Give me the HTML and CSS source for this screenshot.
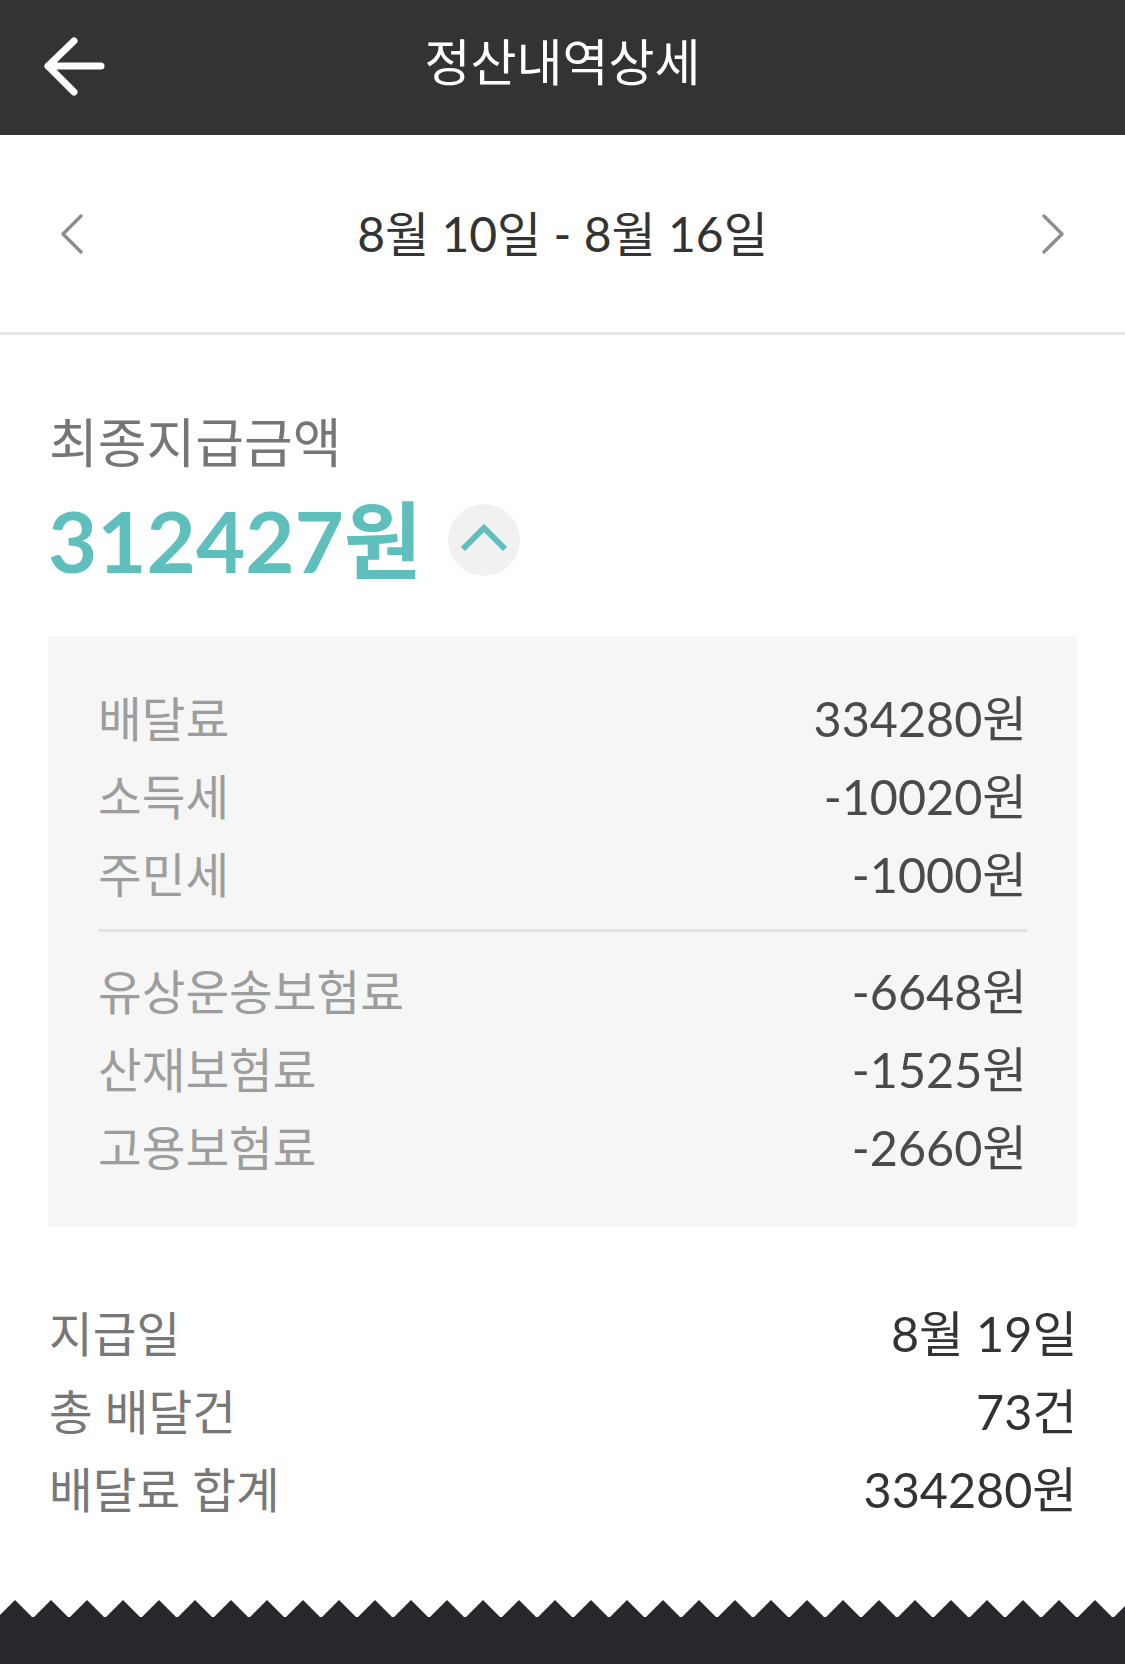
FILE: index.html
```html
<!DOCTYPE html>
<html lang="ko">
<head>
<meta charset="utf-8">
<title>정산내역상세</title>
<link rel="stylesheet" href="styles.css">
</head>
<body>
<div class="app">
  <header class="topbar">
    <div class="topbar-left">
      <svg class="back-icon" width="72" height="72" viewBox="0 0 72 72" aria-hidden="true">
        <path d="M63 33 H10 M36 8 L10 33 L36 59" fill="none" stroke="#ffffff" stroke-width="7" stroke-linecap="round" stroke-linejoin="round"/>
      </svg>
    </div>
    <h1 class="topbar-title">정산내역상세</h1>
    <div class="topbar-right"></div>
  </header>

  <nav class="period-nav">
    <svg class="nav-chevron" width="32" height="44" viewBox="0 0 32 44" aria-hidden="true">
      <path d="M25 4 L7 22 L25 40" fill="none" stroke="#8e8e8e" stroke-width="3.5" stroke-linecap="round" stroke-linejoin="round"/>
    </svg>
    <div class="period-text">8월 10일 - 8월 16일</div>
    <svg class="nav-chevron" width="32" height="44" viewBox="0 0 32 44" aria-hidden="true">
      <path d="M7 4 L25 22 L7 40" fill="none" stroke="#8e8e8e" stroke-width="3.5" stroke-linecap="round" stroke-linejoin="round"/>
    </svg>
  </nav>

  <main class="content">
    <section class="summary">
      <div class="summary-label">최종지급금액</div>
      <div class="summary-amount-row">
        <span class="summary-amount">312427원</span>
        <button class="toggle-btn" type="button" aria-label="접기">
          <svg width="50" height="30" viewBox="0 0 50 30" aria-hidden="true">
            <path d="M4 26 L25 5 L46 26" fill="none" stroke="#5fbfbc" stroke-width="6" stroke-linejoin="miter"/>
          </svg>
        </button>
      </div>
    </section>

    <section class="breakdown">
      <div class="row"><span class="row-label">배달료</span><span class="row-value">334280원</span></div>
      <div class="row"><span class="row-label">소득세</span><span class="row-value">-10020원</span></div>
      <div class="row"><span class="row-label">주민세</span><span class="row-value">-1000원</span></div>
      <div class="breakdown-divider"></div>
      <div class="row"><span class="row-label">유상운송보험료</span><span class="row-value">-6648원</span></div>
      <div class="row"><span class="row-label">산재보험료</span><span class="row-value">-1525원</span></div>
      <div class="row"><span class="row-label">고용보험료</span><span class="row-value">-2660원</span></div>
    </section>

    <section class="details">
      <div class="row"><span class="detail-label">지급일</span><span class="detail-value">8월 19일</span></div>
      <div class="row"><span class="detail-label">총 배달건</span><span class="detail-value">73건</span></div>
      <div class="row"><span class="detail-label">배달료 합계</span><span class="detail-value">334280원</span></div>
    </section>
  </main>

  <footer class="receipt-edge">
    <svg width="1125" height="64" viewBox="0 0 1125 64" aria-hidden="true">
      <defs>
        <pattern id="teeth" x="-3" y="0" width="36" height="18" patternUnits="userSpaceOnUse">
          <polygon points="0,18 18,0 36,18" fill="#28272c"/>
        </pattern>
      </defs>
      <rect x="0" y="0" width="1125" height="18" fill="url(#teeth)"/>
      <rect x="0" y="17" width="1125" height="47" fill="#28272c"/>
    </svg>
  </footer>
</div>
</body>
</html>
```

FILE: styles.css
```css
* {
  box-sizing: border-box;
}

html, body {
  margin: 0;
  padding: 0;
  background: #ffffff;
}

body {
  font-family: Lato, "Noto Sans CJK KR", "Noto Sans", sans-serif;
  color: #333333;
}

.app {
  width: 1125px;
  height: 1664px;
  overflow: hidden;
  display: flex;
  flex-direction: column;
}

/* ---------- top bar ---------- */
.topbar {
  height: 135px;
  background: #333333;
  display: grid;
  grid-template-columns: 1fr auto 1fr;
  align-items: center;
}

.topbar-left {
  display: flex;
  align-items: center;
  padding-left: 38px;
  padding-top: 2px;
}

.back-icon {
  display: block;
}

.topbar-title {
  margin: 0;
  padding-bottom: 12px;
  font-size: 50px;
  font-weight: 400;
  line-height: 60px;
  color: #ffffff;
}

/* ---------- period nav ---------- */
.period-nav {
  height: 200px;
  border-bottom: 3px solid #e6e6e6;
  display: flex;
  align-items: center;
  justify-content: space-between;
  padding: 0 56px;
}

.nav-chevron {
  display: block;
}

.period-text {
  font-size: 48px;
  line-height: 60px;
  color: #333333;
}

/* ---------- content ---------- */
.content {
  padding: 0 48px;
}

.summary {
  padding-top: 76px;
}

.summary-label {
  font-size: 53px;
  line-height: 64px;
  color: #767676;
  padding-left: 1px;
}

.summary-amount-row {
  margin-top: 19px;
  height: 92px;
  display: flex;
  align-items: center;
}

.summary-amount {
  font-size: 85px;
  font-weight: 700;
  line-height: 92px;
  color: #5fbfbc;
}

.toggle-btn {
  margin-left: 26px;
  width: 72px;
  height: 72px;
  border: none;
  border-radius: 50%;
  background: #f1f1f1;
  padding: 0 0 4px 0;
  display: flex;
  align-items: center;
  justify-content: center;
}

.breakdown {
  margin-top: 50px;
  background: #f6f6f6;
  padding: 41px 50px 43px;
}

.row {
  height: 78px;
  display: flex;
  align-items: center;
  justify-content: space-between;
}

.row-label {
  font-size: 47.5px;
  color: #9d9d9d;
}

.row-value {
  font-size: 48.5px;
  color: #4a4a4a;
}

.breakdown-divider {
  height: 3px;
  background: #e3e3e3;
  margin: 18px 0;
}

.details {
  margin-top: 65px;
}

.detail-label {
  font-size: 47.5px;
  color: #777777;
  padding-left: 1px;
}

.detail-value {
  font-size: 48.5px;
  color: #333333;
}

/* ---------- footer edge ---------- */
.receipt-edge {
  margin-top: auto;
  height: 64px;
}

.receipt-edge svg {
  display: block;
}
```
